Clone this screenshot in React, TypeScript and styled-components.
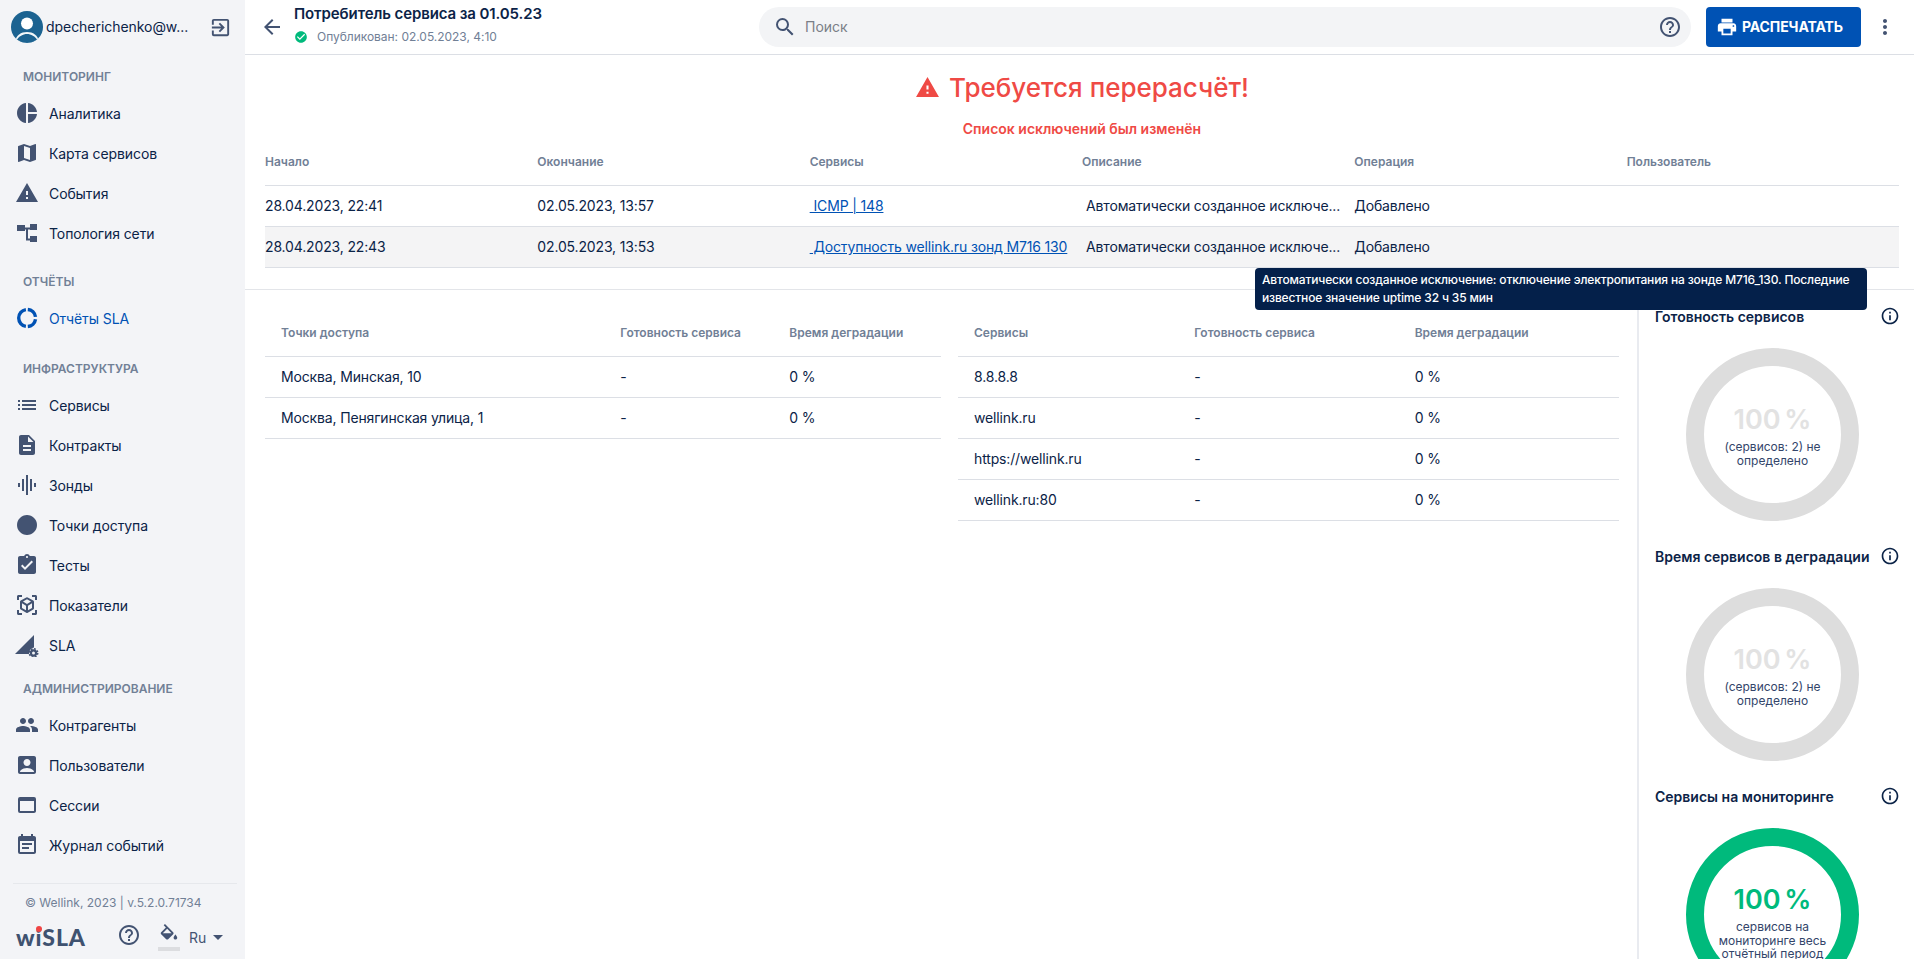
import React from "react";
import styled, { createGlobalStyle } from "styled-components";
import {
  MdArrowBack,
  MdArrowDropDown,
  MdAccountBox,
  MdAssignmentTurnedIn,
  MdCheckCircle,
  MdCircle,
  MdDescription,
  MdEventNote,
  MdGraphicEq,
  MdHelpOutline,
  MdInfoOutline,
  MdList,
  MdMap,
  MdMoreVert,
  MdOutlineExitToApp,
  MdPeople,
  MdPieChart,
  MdPrint,
  MdSearch,
  MdViewInAr,
  MdWarning,
  MdWebAsset,
} from "react-icons/md";

const GlobalStyle = createGlobalStyle`
  html, body {
    margin: 0;
    height: 100%;
    overflow: hidden;
    background: #fff;
  }
  body {
    font-family: Inter, "Noto Sans", sans-serif;
    color: #0b2347;
  }
  * {
    box-sizing: border-box;
  }
`;

const Page = styled.div`
  display: flex;
  height: 959px;
  overflow: hidden;
`;

const Sidebar = styled.aside`
  flex: 0 0 245px;
  height: 959px;
  background: #f3f4f7;
  display: flex;
  flex-direction: column;
`;

const Profile = styled.div`
  display: flex;
  align-items: center;
  height: 55px;
  padding: 0 13px 1px 11px;
`;

const UserName = styled.span`
  flex: 1;
  margin-left: 3px;
  font-size: 14px;
  line-height: 20px;
  letter-spacing: -0.05px;
  color: #0b2347;
`;

const SectionTitle = styled.div<{ $top: number }>`
  margin-top: ${({ $top }) => $top}px;
  margin-bottom: 6px;
  padding-left: 23px;
  font-size: 12px;
  line-height: 20px;
  font-weight: 600;
  color: #718096;
`;

const NavItem = styled.div<{ $active?: boolean }>`
  display: flex;
  align-items: center;
  height: 40px;
  padding-left: 15px;
  font-size: 14px;
  letter-spacing: -0.1px;
  color: ${({ $active }) => ($active ? "#0052b4" : "#0b2347")};
  svg {
    flex: 0 0 24px;
    color: ${({ $active }) => ($active ? "#0052b4" : "#435372")};
  }
`;

const NavLabel = styled.span`
  margin-left: 10px;
`;

const SidebarFooter = styled.div`
  margin: 18px 8px 0 13px;
  border-top: 1px solid #e6e8ec;
  padding-top: 10px;
`;

const Copyright = styled.div`
  padding-left: 12px;
  font-size: 12px;
  line-height: 18px;
  color: #718096;
`;

const FooterRow = styled.div`
  display: flex;
  align-items: center;
  margin-top: 10px;
  padding-left: 3px;
  height: 30px;
  color: #435372;
`;

const Logo = styled.div`
  position: relative;
  width: 72px;
  font-family: Lato, Inter, sans-serif;
  font-size: 23px;
  font-weight: 900;
  letter-spacing: 0.9px;
  color: #3f5270;
`;

const LogoDot = styled.span`
  position: absolute;
  left: 20px;
  top: 3px;
  width: 6px;
  height: 6px;
  border-radius: 50%;
  background: #ef4444;
`;

const HelpSlot = styled.div`
  display: flex;
  margin: -4px 0 0 29px;
`;

const Bucket = styled.div`
  display: flex;
  margin: 0 0 0 17px;
  padding-bottom: 1px;
  border-bottom: 4px solid #dcdde0;
`;

const Lang = styled.span`
  margin-left: 9px;
  font-size: 14px;
`;

const Main = styled.main`
  position: relative;
  flex: 1;
  min-width: 0;
  display: flex;
  flex-direction: column;
`;

const Header = styled.header`
  display: flex;
  align-items: center;
  height: 55px;
  border-bottom: 1px solid #dcdfe5;
  padding: 0 17px 1px 15px;
`;

const BackButton = styled.div`
  display: flex;
  color: #435372;
  margin-right: 10px;
`;

const TitleBlock = styled.div`
  flex: 0 0 465px;
`;

const Title = styled.div`
  font-size: 15px;
  line-height: 20px;
  font-weight: 600;
  letter-spacing: -0.1px;
  margin-top: -3px;
`;

const Published = styled.div`
  display: flex;
  align-items: center;
  margin-top: 4px;
  font-size: 12px;
  line-height: 18px;
  letter-spacing: -0.03px;
  color: #718096;
  svg {
    color: #00ba7c;
    margin-right: 9px;
  }
`;

const SearchBar = styled.div`
  flex: 0 0 932px;
  height: 40px;
  display: flex;
  align-items: center;
  padding: 0 9px 0 14px;
  border-radius: 20px;
  background: #f3f4f6;
  color: #435372;
`;

const SearchText = styled.span`
  flex: 1;
  margin-left: 8px;
  font-size: 14px;
  color: #7a7f87;
`;

const PrintButton = styled.button`
  flex: 0 0 155px;
  height: 40px;
  margin-left: 15px;
  border: none;
  border-radius: 4px;
  background: #0052b4;
  color: #fff;
  display: flex;
  align-items: center;
  padding: 0 0 0 10px;
  font-family: inherit;
  font-size: 14px;
  font-weight: 700;
  letter-spacing: -0.1px;
  svg {
    margin-right: 4px;
  }
`;

const MoreButton = styled.div`
  display: flex;
  margin-left: 12px;
  color: #435372;
`;

const AlertSection = styled.section`
  height: 235px;
  border-bottom: 1px solid #e3e5e9;
  padding: 14px 15px 0 20px;
`;

const AlertTitle = styled.div`
  display: flex;
  justify-content: center;
  align-items: center;
  height: 36px;
  font-size: 26px;
  font-weight: 500;
  color: #ef4a45;
  svg {
    margin-right: 9px;
  }
`;

const AlertNote = styled.div`
  margin-top: 14px;
  text-align: center;
  font-size: 14px;
  line-height: 20px;
  font-weight: 600;
  color: #ef4a45;
`;

const Table = styled.table<{ $width?: number }>`
  width: ${({ $width }) => ($width ? `${$width}px` : "100%")};
  table-layout: fixed;
  border-collapse: collapse;
`;

const Th = styled.th<{ $pad?: number; $w?: string }>`
  width: ${({ $w }) => $w || "auto"};
  height: 46px;
  padding: 0 0 0 ${({ $pad }) => $pad || 0}px;
  border-bottom: 1px solid #dcdfe5;
  text-align: left;
  font-size: 12px;
  font-weight: 600;
  color: #718096;
`;

const Tr = styled.tr<{ $shaded?: boolean }>`
  background: ${({ $shaded }) => ($shaded ? "#f4f4f5" : "transparent")};
`;

const Td = styled.td<{ $pad?: number }>`
  height: 41px;
  padding: 0 0 0 ${({ $pad }) => $pad || 0}px;
  border-bottom: 1px solid #dcdfe5;
  font-size: 14px;
  letter-spacing: -0.15px;
  color: #0b2347;
  white-space: nowrap;
`;

const ServiceLink = styled.a`
  color: #0052b4;
  text-decoration: underline;
`;

const Tooltip = styled.div`
  position: absolute;
  left: 1010px;
  top: 268px;
  width: 612px;
  height: 42px;
  padding: 3px 7px;
  border-radius: 4px;
  background: #04204a;
  color: #fff;
  font-size: 12px;
  font-weight: 500;
  line-height: 18px;
  letter-spacing: -0.15px;
  z-index: 2;
`;

const Body = styled.div`
  flex: 1;
  min-height: 0;
  display: flex;
  padding-left: 20px;
`;

const BodyTables = styled.div`
  flex: 0 0 1372px;
  display: flex;
  align-items: flex-start;
  gap: 17px;
  padding-top: 20px;
`;

const SidePanel = styled.div`
  flex: 1;
  border-left: 2px solid #e9ebf0;
  padding: 16px 14px 0 16px;
`;

const Metric = styled.div`
  height: 240px;
`;

const MetricHead = styled.div`
  display: flex;
  align-items: center;
  justify-content: space-between;
  height: 20px;
  font-size: 14px;
  font-weight: 600;
  color: #0b2347;
`;

const Ring = styled.div<{ $color: string }>`
  width: 173px;
  height: 173px;
  margin: 22px 0 0 31px;
  border: 18px solid ${({ $color }) => $color};
  border-radius: 50%;
  display: flex;
  flex-direction: column;
  align-items: center;
  padding-top: 37px;
`;

const RingValue = styled.div<{ $color: string }>`
  font-size: 27px;
  line-height: 34px;
  font-weight: 600;
  word-spacing: -3px;
  color: ${({ $color }) => $color};
`;

const RingText = styled.div`
  width: 110px;
  margin-top: 3px;
  text-align: center;
  font-size: 12px;
  line-height: 13.5px;
  color: #33456a;
`;

function Avatar() {
  return (
    <svg width="32" height="32" viewBox="0 0 32 32">
      <defs>
        <clipPath id="avatar-clip">
          <circle cx="16" cy="16" r="16" />
        </clipPath>
      </defs>
      <circle cx="16" cy="16" r="16" fill="#1c6391" />
      <g clipPath="url(#avatar-clip)">
        <circle cx="16" cy="12.5" r="6" fill="#fff" />
        <path d="M4 31c1-7 6-10 12-10s11 3 12 10v2H4z" fill="#fff" opacity="0.95" />
        <path d="M5 30c3-5 7-7 11-7s8 2 11 7c-3 1-7 2-11 2s-8-1-11-2z" fill="#1c6391" />
      </g>
    </svg>
  );
}

function TopologyIcon() {
  return (
    <svg width="24" height="24" viewBox="-1 -1 24 24" fill="currentColor">
      <rect x="1" y="3" width="8" height="6" />
      <rect x="14" y="2" width="7" height="6" />
      <rect x="14" y="14" width="7" height="6" />
      <path d="M9 5.5h5v2H12v9h2v2h-4V7.5H9z" />
    </svg>
  );
}

function ReportsIcon() {
  return (
    <svg width="24" height="24" viewBox="-1 -1 24 24" fill="none" stroke="currentColor" strokeWidth="3.4">
      <path d="M11.8 2.5a8.5 8.5 0 0 1 7.7 7.4" />
      <path d="M19.5 12.2a8.5 8.5 0 0 1-7.7 7.3" />
      <path d="M9.9 19.4a8.5 8.5 0 0 1 0-16.8" />
    </svg>
  );
}

function SlaIcon() {
  return (
    <svg width="24" height="24" viewBox="0 0 24 24" fill="currentColor">
      <path d="M0 21 19 2v12.5a6 6 0 0 0-5 6.5z" />
      <circle cx="18.5" cy="20" r="2.6" fill="none" stroke="currentColor" strokeWidth="2.2" />
      <circle cx="18.5" cy="20" r="4.2" fill="none" stroke="currentColor" strokeWidth="1.6" strokeDasharray="1.8 1.5" />
    </svg>
  );
}

function BucketIcon() {
  return (
    <svg width="22" height="22" viewBox="0 0 24 24" fill="currentColor">
      <path d="M16.56 8.94 7.62 0 6.21 1.41l2.38 2.38-5.15 5.15c-.59.59-.59 1.54 0 2.12l5.5 5.5c.29.29.68.44 1.06.44s.77-.15 1.06-.44l5.5-5.5c.59-.58.59-1.53 0-2.12zM5.21 10 10 5.21 14.79 10H5.21zM19 11.5s-2 2.17-2 3.5c0 1.1.9 2 2 2s2-.9 2-2c0-1.33-2-3.5-2-3.5z" />
    </svg>
  );
}

const navIcon = { size: 24 };

const monitoring = [
  { label: "Аналитика", icon: <MdPieChart {...navIcon} /> },
  { label: "Карта сервисов", icon: <MdMap {...navIcon} /> },
  { label: "События", icon: <MdWarning {...navIcon} /> },
  { label: "Топология сети", icon: <TopologyIcon /> },
];

const infrastructure = [
  { label: "Сервисы", icon: <MdList {...navIcon} /> },
  { label: "Контракты", icon: <MdDescription {...navIcon} /> },
  { label: "Зонды", icon: <MdGraphicEq {...navIcon} /> },
  { label: "Точки доступа", icon: <MdCircle {...navIcon} /> },
  { label: "Тесты", icon: <MdAssignmentTurnedIn {...navIcon} /> },
  { label: "Показатели", icon: <MdViewInAr {...navIcon} /> },
  { label: "SLA", icon: <SlaIcon /> },
];

const administration = [
  { label: "Контрагенты", icon: <MdPeople {...navIcon} /> },
  { label: "Пользователи", icon: <MdAccountBox {...navIcon} /> },
  { label: "Сессии", icon: <MdWebAsset {...navIcon} /> },
  { label: "Журнал событий", icon: <MdEventNote {...navIcon} /> },
];

const exceptions = [
  { start: "28.04.2023, 22:41", end: "02.05.2023, 13:57", service: "\u00a0ICMP | 148" },
  { start: "28.04.2023, 22:43", end: "02.05.2023, 13:53", service: "\u00a0Доступность wellink.ru зонд M716 130" },
];

const accessPoints = ["Москва, Минская, 10", "Москва, Пенягинская улица, 1"];
const services = ["8.8.8.8", "wellink.ru", "https://wellink.ru", "wellink.ru:80"];

const GREY = "#dddddd";
const GREEN = "#00ba7c";

function Nav({ items }: { items: { label: string; icon: React.ReactNode }[] }) {
  return (
    <>
      {items.map((item) => (
        <NavItem key={item.label}>
          {item.icon}
          <NavLabel>{item.label}</NavLabel>
        </NavItem>
      ))}
    </>
  );
}

function MetricBlock(props: { title: string; color: string; valueColor: string; text: string }) {
  return (
    <Metric>
      <MetricHead>
        {props.title}
        <MdInfoOutline size={20} color="#0b2347" />
      </MetricHead>
      <Ring $color={props.color}>
        <RingValue $color={props.valueColor}>100 %</RingValue>
        <RingText>{props.text}</RingText>
      </Ring>
    </Metric>
  );
}

export default function App() {
  return (
    <Page>
      <GlobalStyle />
      <Sidebar>
        <Profile>
          <Avatar />
          <UserName>dpecherichenko@w...</UserName>
          <MdOutlineExitToApp size={23} color="#435372" />
        </Profile>
        <SectionTitle $top={12}>МОНИТОРИНГ</SectionTitle>
        <Nav items={monitoring} />
        <SectionTitle $top={19}>ОТЧЁТЫ</SectionTitle>
        <NavItem $active>
          <ReportsIcon />
          <NavLabel>Отчёты SLA</NavLabel>
        </NavItem>
        <SectionTitle $top={21}>ИНФРАСТРУКТУРА</SectionTitle>
        <Nav items={infrastructure} />
        <SectionTitle $top={14}>АДМИНИСТРИРОВАНИЕ</SectionTitle>
        <Nav items={administration} />
        <SidebarFooter>
          <Copyright>© Wellink, 2023 | v.5.2.0.71734</Copyright>
          <FooterRow>
            <Logo>
              wiSLA
              <LogoDot />
            </Logo>
            <HelpSlot>
              <MdHelpOutline size={24} />
            </HelpSlot>
            <Bucket>
              <BucketIcon />
            </Bucket>
            <Lang>Ru</Lang>
            <MdArrowDropDown size={24} />
          </FooterRow>
        </SidebarFooter>
      </Sidebar>

      <Main>
        <Header>
          <BackButton>
            <MdArrowBack size={24} />
          </BackButton>
          <TitleBlock>
            <Title>Потребитель сервиса за 01.05.23</Title>
            <Published>
              <MdCheckCircle size={14} />
              Опубликован: 02.05.2023, 4:10
            </Published>
          </TitleBlock>
          <SearchBar>
            <MdSearch size={24} />
            <SearchText>Поиск</SearchText>
            <MdHelpOutline size={24} />
          </SearchBar>
          <PrintButton>
            <MdPrint size={22} />
            РАСПЕЧАТАТЬ
          </PrintButton>
          <MoreButton>
            <MdMoreVert size={24} />
          </MoreButton>
        </Header>

        <AlertSection>
          <AlertTitle>
            <MdWarning size={25} />
            Требуется перерасчёт!
          </AlertTitle>
          <AlertNote>Список исключений был изменён</AlertNote>
          <Table>
            <thead>
              <tr>
                <Th>Начало</Th>
                <Th>Окончание</Th>
                <Th>Сервисы</Th>
                <Th>Описание</Th>
                <Th>Операция</Th>
                <Th>Пользователь</Th>
              </tr>
            </thead>
            <tbody>
              {exceptions.map((row, i) => (
                <Tr key={row.start} $shaded={i === 1}>
                  <Td>{row.start}</Td>
                  <Td>{row.end}</Td>
                  <Td>
                    <ServiceLink href="#">{row.service}</ServiceLink>
                  </Td>
                  <Td $pad={4}>Автоматически созданное исключе...</Td>
                  <Td>Добавлено</Td>
                  <Td />
                </Tr>
              ))}
            </tbody>
          </Table>
        </AlertSection>

        <Tooltip>
          Автоматически созданное исключение: отключение электропитания на зонде M716_130. Последние
          известное значение uptime 32 ч 35 мин
        </Tooltip>

        <Body>
          <BodyTables>
            <Table $width={676}>
              <thead>
                <tr>
                  <Th $pad={16} $w="50.2%">Точки доступа</Th>
                  <Th $pad={16} $w="25%">Готовность сервиса</Th>
                  <Th $pad={16} $w="24.8%">Время деградации</Th>
                </tr>
              </thead>
              <tbody>
                {accessPoints.map((name) => (
                  <tr key={name}>
                    <Td $pad={16}>{name}</Td>
                    <Td $pad={16}>-</Td>
                    <Td $pad={16}>0 %</Td>
                  </tr>
                ))}
              </tbody>
            </Table>
            <Table $width={661}>
              <thead>
                <tr>
                  <Th $pad={16}>Сервисы</Th>
                  <Th $pad={16}>Готовность сервиса</Th>
                  <Th $pad={16}>Время деградации</Th>
                </tr>
              </thead>
              <tbody>
                {services.map((name) => (
                  <tr key={name}>
                    <Td $pad={16}>{name}</Td>
                    <Td $pad={16}>-</Td>
                    <Td $pad={16}>0 %</Td>
                  </tr>
                ))}
              </tbody>
            </Table>
          </BodyTables>
          <SidePanel>
            <MetricBlock title="Готовность сервисов" color={GREY} valueColor="#e2e2e2" text="(сервисов: 2) не определено" />
            <MetricBlock title="Время сервисов в деградации" color={GREY} valueColor="#e2e2e2" text="(сервисов: 2) не определено" />
            <MetricBlock title="Сервисы на мониторинге" color={GREEN} valueColor={GREEN} text="сервисов на мониторинге весь отчётный период" />
          </SidePanel>
        </Body>
      </Main>
    </Page>
  );
}
